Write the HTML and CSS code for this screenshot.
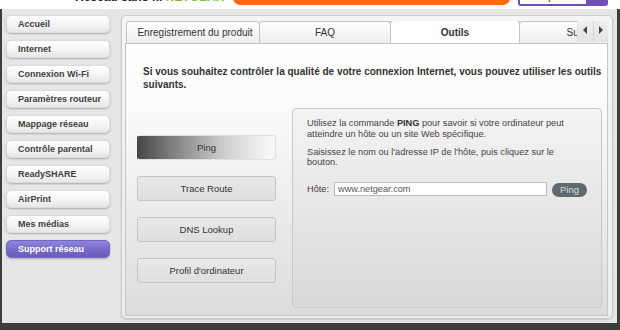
FILE: index.html
```html
<!DOCTYPE html>
<html lang="fr">
<head>
    <meta charset="UTF-8">
    <meta name="viewport" content="width=device-width, initial-scale=1.0">
    <title>NETGEAR - Support réseau</title>
    <link rel="stylesheet" href="styles.css">
</head>
<body>
    <div class="header">
        <span class="site-title">Réseau sans fil <span class="brand">NETGEAR</span></span>
        <div class="orange-bar"></div>
        <div class="lang-select">
            <span class="lang-value">Français</span>
            <span class="lang-arrow"></span>
        </div>
    </div>

    <div class="main">
        <div class="sidebar">
            <div class="nav-item">Accueil</div>
            <div class="nav-item">Internet</div>
            <div class="nav-item">Connexion Wi-Fi</div>
            <div class="nav-item">Paramètres routeur</div>
            <div class="nav-item">Mappage réseau</div>
            <div class="nav-item">Contrôle parental</div>
            <div class="nav-item">ReadySHARE</div>
            <div class="nav-item">AirPrint</div>
            <div class="nav-item">Mes médias</div>
            <div class="nav-item active">Support réseau</div>
        </div>

        <div class="panel">
            <div class="tabs">
                <div class="tab tab-first">Enregistrement du produit</div>
                <div class="tab tab-faq">FAQ</div>
                <div class="tab tab-active">Outils</div>
                <div class="tab">Support</div>
                <div class="tab-arrows">
                    <span class="arrow arrow-left"></span>
                    <span class="arrow arrow-right"></span>
                </div>
            </div>

            <div class="content">
                <p class="intro">Si vous souhaitez contrôler la qualité de votre connexion Internet, vous pouvez utiliser les outils suivants.</p>

                <div class="tools">
                    <div class="tool-list">
                        <div class="tool-btn selected">Ping</div>
                        <div class="tool-btn">Trace Route</div>
                        <div class="tool-btn">DNS Lookup</div>
                        <div class="tool-btn">Profil d'ordinateur</div>
                    </div>

                    <div class="tool-box">
                        <p>Utilisez la commande <b>PING</b> pour savoir si votre ordinateur peut atteindre un hôte ou un site Web spécifique.</p>
                        <p>Saisissez le nom ou l'adresse IP de l'hôte, puis cliquez sur le bouton.</p>
                        <div class="host-row">
                            <label for="host">Hôte:</label>
                            <input id="host" class="host-input" type="text" value="www.netgear.com">
                            <button class="ping-btn">Ping</button>
                        </div>
                    </div>
                </div>
            </div>
        </div>
    </div>
</body>
</html>
```

FILE: styles.css
```css
body {
    margin: 0;
    background-color: #3d3d3d;
    font-family: "Liberation Sans", Arial, sans-serif;
    color: #333;
}

/* top strip, mostly scrolled out of view */
.header {
    display: flex;
    align-items: flex-end;
    height: 9px;
    overflow: hidden;
    background-color: #fff;
    padding-left: 75px;
}
.site-title {
    width: 158px;
    flex-shrink: 0;
    font-size: 12px;
    line-height: 12px;
    font-weight: bold;
    color: #222;
    white-space: nowrap;
    margin-bottom: 6px;
}
.brand {
    color: #7cc33a;
}
.orange-bar {
    width: 277px;
    height: 14px;
    margin-bottom: 4px;
    background-color: #ff6a13;
    border-radius: 0 0 7px 7px;
}
.lang-select {
    display: flex;
    width: 90px;
    height: 14px;
    margin-left: 8px;
    margin-bottom: 3px;
    box-sizing: border-box;
    border: 2px solid #6f4fb3;
    border-top: none;
    border-radius: 0 0 3px 3px;
    background-color: #fff;
}
.lang-value {
    flex: 1;
    font-size: 10px;
    line-height: 10px;
    padding-left: 6px;
    color: #333;
}
.lang-arrow {
    width: 20px;
    background-color: #6f4fb3;
}

.main {
    display: flex;
    height: 314px;
    margin: 0 3px 0 2px;
    background-color: #e6e6e6;
}

/* left navigation */
.sidebar {
    width: 119px;
    flex-shrink: 0;
    box-sizing: border-box;
    padding: 6px 0 0 4px;
    display: flex;
    flex-direction: column;
    gap: 7px;
}
.nav-item {
    width: 104px;
    height: 18px;
    box-sizing: border-box;
    padding-left: 11px;
    font-size: 9px;
    line-height: 17px;
    font-weight: bold;
    color: #3f3f3f;
    background: linear-gradient(#ffffff, #f3f3f3 60%, #e6e6e6);
    border: 1px solid #dcdcdc;
    border-radius: 5px;
    box-shadow: 0 1px 2px rgba(0, 0, 0, 0.25);
}
.nav-item.active {
    color: #fff;
    background: linear-gradient(#8f86da, #7468c7 60%, #6a5dbd);
    border-color: #7166c4;
}

/* main panel */
.panel {
    width: 492px;
    height: 304px;
    margin-top: 6px;
    box-sizing: border-box;
    padding: 5px 4px 2px 3px;
    background: linear-gradient(#f5f5f5, #ececec);
    border: 1px solid #cbcbcb;
    border-radius: 5px;
    box-shadow: 0 1px 2px rgba(0, 0, 0, 0.15);
    display: flex;
    flex-direction: column;
}
.tabs {
    position: relative;
    display: flex;
    height: 22px;
    flex-shrink: 0;
    padding-left: 1px;
    overflow: hidden;
}
.tab {
    flex-shrink: 0;
    width: 130px;
    box-sizing: border-box;
    margin-right: -1px;
    border: 1px solid #c3c3c3;
    border-bottom: none;
    border-radius: 4px 4px 0 0;
    background: linear-gradient(#ffffff, #eeeeee);
    font-size: 10px;
    line-height: 21px;
    text-align: center;
    color: #333;
    white-space: nowrap;
    overflow: hidden;
}
.tab-first {
    width: 134px;
    padding-left: 4px;
}
.tab-faq {
    width: 132px;
}
.tab-active {
    width: 130px;
    background: #fff;
    font-weight: bold;
    margin-top: -1px;
    line-height: 23px;
}
.tab-arrows {
    position: absolute;
    top: -6px;
    right: 0;
    width: 30px;
    height: 27px;
    display: flex;
    background: linear-gradient(#f2f2f2, #e4e4e4);
    border-left: 1px solid #e0e0e0;
}
.arrow {
    flex: 1;
    display: flex;
    align-items: center;
    justify-content: center;
}
.arrow-left {
    border-right: 1px solid #d2d2d2;
}
.arrow::before {
    content: "";
    border-top: 4px solid transparent;
    border-bottom: 4px solid transparent;
    margin-top: 3px;
}
.arrow-left::before {
    border-right: 4px solid #444;
}
.arrow-right::before {
    border-left: 4px solid #444;
}

.content {
    flex: 1;
    box-sizing: border-box;
    padding: 21px 4px 0 11px;
    background: linear-gradient(#ffffff, #fafafa 25%, #dcdcdc);
    border: 1px solid #c6c6c6;
}
.intro {
    margin: 0;
    padding-left: 6px;
    font-size: 10px;
    line-height: 13px;
    font-weight: bold;
    color: #333;
}

.tools {
    display: flex;
    gap: 16px;
    margin: 17px 3px 0 0;
}
.tool-list {
    width: 139px;
    flex-shrink: 0;
    padding-top: 27px;
    display: flex;
    flex-direction: column;
    gap: 16px;
}
.tool-btn {
    height: 25px;
    box-sizing: border-box;
    font-size: 9.5px;
    line-height: 23px;
    text-align: center;
    color: #333;
    background: linear-gradient(#e9e9e9, #dedede);
    border: 1px solid #c4c4c4;
    border-radius: 3px;
}
.tool-btn.selected {
    background: linear-gradient(to right, #474747, #7e7e7e 25%, #c9c9c9 60%, #f6f6f6 95%, #f6f6f6);
    border-color: #e0e0e0;
    border-left-color: #444;
}

.tool-box {
    flex: 1;
    height: 200px;
    box-sizing: border-box;
    padding: 9px 14px;
    background: linear-gradient(#f4f4f4, #d9d9d9);
    border: 1px solid #c9c9c9;
    border-radius: 4px;
    font-size: 9.2px;
    line-height: 10.5px;
    color: #444;
}
.tool-box p {
    margin: 0 0 7.5px 0;
}
.tool-box b {
    color: #333;
}
.host-row {
    display: flex;
    align-items: center;
    margin-top: 14px;
}
.host-row label {
    width: 27px;
}
.host-input {
    width: 213px;
    height: 14px;
    box-sizing: border-box;
    margin: 0;
    padding: 0 3px;
    border: 1px solid #bdbdbd;
    font-family: "Liberation Sans", Arial, sans-serif;
    font-size: 9.2px;
    color: #555;
    background-color: #fff;
}
.ping-btn {
    width: 35px;
    height: 14px;
    margin: 1px 0 0 5px;
    padding: 0;
    border: none;
    border-radius: 7px;
    background-color: #5f6970;
    color: #d6dadc;
    font-family: "Liberation Sans", Arial, sans-serif;
    font-size: 9.5px;
}
```
